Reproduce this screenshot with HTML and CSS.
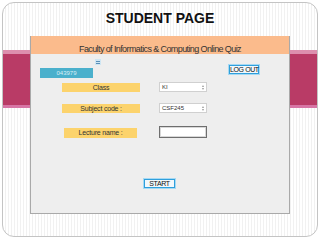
FILE: index.html
```html
<!DOCTYPE html>
<html>
<head>
<meta charset="utf-8">
<link rel="stylesheet" href="styles.css">
</head>
<body>
<div class="slide">
  <h1 class="title">STUDENT PAGE</h1>
  <div class="win">
    <div class="win-head">Faculty of Informatics &amp; Computing Online Quiz</div>
    <div class="win-body">
      <div class="icon-row">
        <svg class="mini" width="6" height="6" viewBox="0 0 6 6">
          <rect x="0" y="0" width="6" height="6" fill="#cfe6f3"/>
          <rect x="1" y="2" width="4" height="1" fill="#5a8fb8"/>
          <rect x="1" y="4" width="4" height="1" fill="#5a8fb8"/>
        </svg>
      </div>
      <div class="top-row">
        <div class="idbox">043979</div>
        <button class="btn logout">LOG OUT</button>
      </div>
      <div class="frow r1">
        <div class="label">Class</div>
        <div class="select"><span>KI</span><span class="spin"><i class="up"></i><i class="down"></i></span></div>
      </div>
      <div class="frow r2">
        <div class="label">Subject code :</div>
        <div class="select"><span>CSF245</span><span class="spin"><i class="up"></i><i class="down"></i></span></div>
      </div>
      <div class="frow r3">
        <div class="label lec">Lecture name :</div>
        <div class="input"></div>
      </div>
      <div class="start-row">
        <button class="btn start">START</button>
      </div>
    </div>
  </div>
</div>
</body>
</html>
```

FILE: styles.css
```css
html, body {
  margin: 0;
  padding: 0;
  background: #ffffff;
  font-family: "Liberation Sans", Arial, sans-serif;
}
.slide {
  box-sizing: border-box;
  margin: 2px 0 0 2px;
  width: 316px;
  height: 235px;
  border: 1px solid #c4c4c4;
  border-radius: 12px;
  background:
    linear-gradient(to bottom, #dd8fae 0 4px, #b93b66 4px 55px, #d775a5 55px 58px) 0 47px / 100% 58px no-repeat,
    repeating-linear-gradient(to right, #ffffff 0 2px, #f1f1f1 2px 3px);
  overflow: hidden;
}
.title {
  margin: 0;
  padding-top: 8px;
  height: 25px;
  box-sizing: border-box;
  text-align: center;
  font-size: 14px;
  line-height: 14px;
  font-weight: bold;
  color: #111;
}
.win {
  box-sizing: border-box;
  margin-left: 27px;
  margin-top: 8px;
  width: 260px;
  height: 178px;
  border: 1px solid #a9a9a9;
  border-top: none;
  background: #eeeeee;
}
.win-head {
  height: 18px;
  background: #fbbb8c;
  box-sizing: border-box;
  padding-top: 9px;
  font-size: 9px;
  line-height: 9px;
  letter-spacing: -0.6px;
  text-align: center;
  color: #333;
  white-space: nowrap;
}
.icon-row {
  height: 6px;
  margin-top: 5px;
  padding-left: 64px;
  display: flex;
}
.top-row {
  display: flex;
  align-items: flex-start;
}
.idbox {
  margin-left: 9px;
  margin-top: 3px;
  width: 53px;
  height: 10px;
  background: #4bb0cc;
  color: #d9eff6;
  font-size: 6px;
  line-height: 10px;
  text-align: center;
}
.btn {
  box-sizing: border-box;
  padding: 0;
  margin: 0;
  border: 1px solid #2f9fdc;
  box-shadow: 0 0 0 1px #a6d9f3;
  background: #f2f8fc;
  font-family: "Liberation Sans", Arial, sans-serif;
  font-size: 7px;
  line-height: 7px;
  letter-spacing: -0.4px;
  color: #111;
  white-space: nowrap;
  text-align: center;
}
.logout {
  margin-left: auto;
  margin-right: 30px;
  width: 30px;
  height: 9px;
}
.frow {
  display: flex;
  align-items: center;
  margin-left: 31px;
}
.r1 { margin-top: 4px; height: 10px; }
.r2 { margin-top: 11px; height: 10px; }
.r3 { margin-top: 13px; height: 12px; }
.label {
  width: 78px;
  height: 9px;
  background: #fcd36c;
  color: #333;
  font-size: 7px;
  line-height: 9px;
  text-align: center;
  letter-spacing: -0.2px;
}
.label.lec {
  width: 73px;
  margin-left: 2px;
  margin-right: 3px;
  height: 10px;
  line-height: 10px;
  align-self: flex-end;
}
.select {
  box-sizing: border-box;
  margin-left: 19px;
  width: 48px;
  height: 10px;
  background: #fff;
  border: 1px solid #d0d0d0;
  display: flex;
  align-items: center;
  justify-content: space-between;
  padding-left: 2px;
  font-size: 6px;
  color: #333;
}
.spin {
  display: flex;
  flex-direction: column;
  gap: 1px;
  padding-right: 2px;
}
.spin i {
  display: block;
  width: 0;
  height: 0;
  border-left: 1.5px solid transparent;
  border-right: 1.5px solid transparent;
}
.spin .up { border-bottom: 2px solid #999; }
.spin .down { border-top: 2px solid #999; }
.input {
  box-sizing: border-box;
  margin-left: 19px;
  width: 48px;
  height: 12px;
  background: #fff;
  border: 1px solid #6e6e6e;
  box-shadow: inset 0 0 0 1px #d8d8d8;
}
.start-row {
  display: flex;
  justify-content: center;
  margin-top: 41px;
  padding-right: 1px;
}
.start {
  width: 31px;
  height: 9px;
}
```
